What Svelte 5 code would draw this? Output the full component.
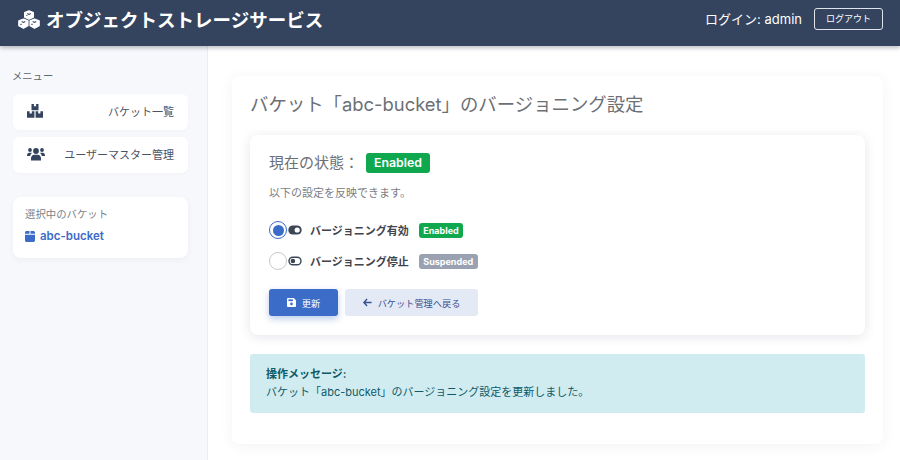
<script>
  const versioning = [
    { label: 'バージョニング有効', badge: 'Enabled', on: true },
    { label: 'バージョニング停止', badge: 'Suspended', on: false }
  ];
</script>

<div class="page">
  <header class="top">
    <div class="brand">
      <svg class="logo" viewBox="0 0 22 19" width="22" height="19">
        <g fill="#fff" stroke="#fff" stroke-width="1.200" stroke-linejoin="round">
          <path d="M11 .8l4.400 1.800v4.700L11 9.200 6.600 7.300V2.600z"/>
          <path d="M5.500 9l4.500 1.900v4.900L5.500 18.300.8 15.800v-4.900z"/>
          <path d="M16.500 9l4.700 1.900v4.900l-4.700 2.500-4.500-2.500v-4.900z"/>
        </g>
        <path d="M9.200 3.600L11 4.400l1.800-.8M3.700 11.600l1.800.8 1.800-.8M14.700 11.600l1.800.8 1.800-.8" stroke="#34445f" stroke-width="1.100" fill="none"/>
        <path d="M8.800 6.100v-.9M3 14.900v-1.200M14 14.900v-1.200" stroke="#34445f" stroke-width="1.300" fill="none"/>
      </svg>
      <span>オブジェクトストレージサービス</span>
    </div>
    <div class="login">
      <span>ログイン: admin</span>
      <button class="logout">ログアウト</button>
    </div>
  </header>

  <div class="body">
    <aside class="side">
      <div class="menu-title">メニュー</div>
      <a class="menu-item">
        <svg viewBox="0 0 16 14" width="16" height="14" fill="#34445f">
          <path d="M4.500 0h2.400v2.200h2.200V0h2.400v6.200h-7z"/>
          <path d="M0 7.200h2.600v2.200h2.200V7.200h2.600v6.600H0z"/>
          <path d="M8.600 7.200h2.600v2.200h2.200V7.200H16v6.600H8.600z"/>
        </svg>
        <span>バケット一覧</span>
      </a>
      <a class="menu-item">
        <svg viewBox="0 0 18 14" width="18" height="14" fill="#34445f">
          <circle cx="9" cy="4" r="2.900"/>
          <circle cx="3" cy="3" r="1.900"/>
          <circle cx="15" cy="3" r="1.900"/>
          <path d="M4 13.600v-2.200c0-2 1.500-3.600 3.300-3.600h3.400c1.800 0 3.300 1.600 3.300 3.600v2.200z"/>
          <path d="M0 8.600c0-1.600 1-2.800 2.200-2.800h1.600c.4 0 .8.100 1.100.3-.9.700-1.500 1.700-1.700 2.900H0z"/>
          <path d="M18 8.600c0-1.600-1-2.800-2.200-2.800h-1.600c-.4 0-.8.100-1.100.3.900.700 1.500 1.700 1.700 2.900H18z"/>
        </svg>
        <span>ユーザーマスター管理</span>
      </a>
      <div class="selected">
        <div class="selected-label">選択中のバケット</div>
        <div class="selected-name">
          <svg viewBox="0 0 10 11" width="10" height="11" fill="#3b6cc7">
            <path d="M1.800 0h2.700v2.800H0V1.500C0 .7.800 0 1.800 0zM5.500 0h2.700c1 0 1.800.7 1.800 1.500v1.300H5.500zM0 3.800h10v5.700c0 .8-.8 1.500-1.800 1.500H1.800C.8 11 0 10.300 0 9.500z"/>
          </svg>
          <span>abc-bucket</span>
        </div>
      </div>
    </aside>

    <main class="main">
      <section class="panel">
        <h1>バケット「abc-bucket」のバージョニング設定</h1>
        <div class="inner">
          <div class="status">
            <span>現在の状態：</span>
            <span class="status-badge">Enabled</span>
          </div>
          <p class="hint">以下の設定を反映できます。</p>
          <div class="options">
            {#each versioning as v}
              <div class="option">
                <span class="radio" class:checked={v.on}></span>
                <svg class="toggle" viewBox="0 0 14 10" width="14" height="10">
                  {#if v.on}
                    <rect x="0.300" y="0.500" width="13.400" height="9" rx="4.500" fill="#3c4657"/>
                    <circle cx="9.200" cy="5" r="2.600" fill="#fff"/>
                  {:else}
                    <rect x="1" y="1.200" width="12" height="7.600" rx="3.800" fill="none" stroke="#3c4657" stroke-width="1.400"/>
                    <circle cx="4.900" cy="5" r="2.300" fill="#3c4657"/>
                  {/if}
                </svg>
                <span class="opt-label">{v.label}</span>
                <span class="mini" class:green={v.on}>{v.badge}</span>
              </div>
            {/each}
          </div>
          <div class="actions">
            <button class="primary">
              <svg viewBox="0 0 10 10" width="9" height="9">
                <path d="M1 0h6.500L10 2.500V9a1 1 0 0 1-1 1H1a1 1 0 0 1-1-1V1a1 1 0 0 1 1-1z" fill="#fff"/>
                <rect x="1.600" y="1.500" width="5" height="2" fill="#3b6cc7"/>
                <circle cx="5" cy="6.600" r="1.500" fill="#3b6cc7"/>
              </svg>
              <span>更新</span>
            </button>
            <button class="secondary">
              <svg viewBox="0 0 10 10" width="9" height="9">
                <path d="M4.500 1.200L1 5l3.500 3.800M1.200 5H9.500" fill="none" stroke="#34508f" stroke-width="1.500"/>
              </svg>
              <span>バケット管理へ戻る</span>
            </button>
          </div>
        </div>
        <div class="alert">
          <strong>操作メッセージ:</strong>
          <div>バケット「abc-bucket」のバージョニング設定を更新しました。</div>
        </div>
      </section>
    </main>
  </div>
</div>

<style>
  :global(body) {
    margin: 0;
    font-family: Inter, "Noto Sans CJK JP", sans-serif;
    background: #fff;
  }
  .page {
    width: 900px;
    height: 460px;
    overflow: hidden;
    display: flex;
    flex-direction: column;
  }
  .top {
    height: 46px;
    flex: none;
    background: #34445f;
    box-shadow: 0 2px 4px rgba(30, 40, 60, 0.3);
    display: flex;
    align-items: center;
    justify-content: space-between;
    padding: 0 17px 9px 18px;
    box-sizing: border-box;
    position: relative;
    z-index: 1;
  }
  .brand {
    display: flex;
    align-items: center;
    gap: 6px;
    color: #fff;
    font-size: 18.500px;
    font-weight: 700;
  }
  .logo {
    margin-top: 2px;
  }
  .login {
    display: flex;
    align-items: center;
    gap: 12px;
    color: #fff;
    font-size: 13px;
  }
  .logout {
    width: 69px;
    height: 22px;
    background: transparent;
    border: 1px solid #dfe4ec;
    border-radius: 3px;
    color: #fff;
    font: inherit;
    font-size: 9px;
    padding: 0;
  }
  .body {
    flex: 1;
    display: flex;
    min-height: 0;
  }
  .side {
    width: 208px;
    flex: none;
    box-sizing: border-box;
    background: #f7f8fb;
    border-right: 1px solid #e9ecf1;
    padding: 22px 19px 0 13px;
  }
  .menu-title {
    font-size: 10.300px;
    color: #5f6670;
    line-height: 16px;
    margin-bottom: 10px;
    margin-left: -1px;
  }
  .menu-item {
    display: flex;
    align-items: center;
    justify-content: space-between;
    height: 36px;
    background: #fff;
    border-radius: 6px;
    padding: 0 14px 3px 14px;
    box-sizing: border-box;
    margin-bottom: 7px;
    font-size: 11px;
    color: #4a5363;
    box-shadow: 0 1px 3px rgba(40, 50, 80, 0.03);
  }
  .selected {
    margin-top: 24px;
    height: 61px;
    background: #fff;
    border-radius: 8px;
    padding: 10px 12px;
    box-sizing: border-box;
    box-shadow: 0 2px 6px rgba(40, 50, 80, 0.05);
  }
  .selected-label {
    font-size: 10.400px;
    line-height: 16px;
    color: #7b828c;
    margin-bottom: 5px;
  }
  .selected-name {
    display: flex;
    align-items: center;
    gap: 5px;
    font-size: 11.500px;
    line-height: 16px;
    font-weight: 600;
    color: #3b6cc7;
  }
  .main {
    flex: 1;
    padding: 30px 17px 0 24px;
    min-width: 0;
  }
  .panel {
    height: 368px;
    box-sizing: border-box;
    background: #fff;
    border-radius: 8px;
    padding: 13px 18px;
    box-shadow: 0 2px 14px rgba(40, 50, 80, 0.06);
  }
  h1 {
    margin: 0 0 16px;
    font-size: 18.400px;
    line-height: 30px;
    font-weight: 400;
    color: #6c6f75;
  }
  .inner {
    height: 200px;
    box-sizing: border-box;
    background: #fff;
    border-radius: 8px;
    padding: 18px 19px;
    box-shadow: 0 2px 12px rgba(40, 50, 80, 0.12);
    margin-bottom: 19px;
  }
  .status {
    display: flex;
    align-items: center;
    gap: 7px;
    font-size: 15px;
    line-height: 20px;
    color: #6c6f75;
  }
  .status-badge {
    background: #10a84f;
    color: #fff;
    font-size: 12.300px;
    font-weight: 600;
    line-height: 20px;
    padding: 0 8px;
    border-radius: 3px;
  }
  .hint {
    margin: 12px 0 0;
    font-size: 11px;
    line-height: 16px;
    color: #7b7d82;
  }
  .options {
    margin-top: 20px;
    display: flex;
    flex-direction: column;
    gap: 13px;
  }
  .option {
    display: flex;
    align-items: center;
    height: 18px;
  }
  .radio {
    width: 16px;
    height: 16px;
    border-radius: 50%;
    border: 1px solid #c6c9ce;
    background: #fff;
    position: relative;
    flex: none;
    margin-right: 1px;
  }
  .radio.checked {
    border-color: #3b6cc7;
  }
  .radio.checked::after {
    content: "";
    position: absolute;
    inset: 2.500px;
    border-radius: 50%;
    background: #3b6cc7;
  }
  .toggle {
    flex: none;
    margin-right: 8px;
  }
  .opt-label {
    font-size: 11px;
    font-weight: 600;
    color: #3f444d;
    margin-right: 10px;
  }
  .mini {
    background: #9aa2b1;
    color: #fff;
    font-size: 9px;
    font-weight: 700;
    line-height: 15px;
    padding: 0 4.500px;
    border-radius: 3px;
  }
  .mini.green {
    background: #10a84f;
  }
  .actions {
    display: flex;
    gap: 7px;
    margin-top: 19px;
  }
  .actions button {
    height: 27px;
    border: none;
    border-radius: 3px;
    font: inherit;
    font-size: 9.200px;
    display: flex;
    align-items: center;
    justify-content: center;
    gap: 6px;
    padding: 0;
  }
  .primary {
    width: 69px;
    background: #3b6cc7;
    color: #fff;
    box-shadow: 0 3px 7px rgba(59, 108, 199, 0.35);
  }
  .secondary {
    width: 133px;
    background: #e3eaf6;
    color: #34508f;
  }
  .alert {
    height: 59px;
    box-sizing: border-box;
    background: #d1ecf1;
    border-radius: 3px;
    padding: 11px 16px;
    font-size: 11px;
    line-height: 18px;
    color: #0e5a66;
  }
  .alert strong {
    font-size: 11px;
    font-weight: 700;
    display: block;
  }
</style>
